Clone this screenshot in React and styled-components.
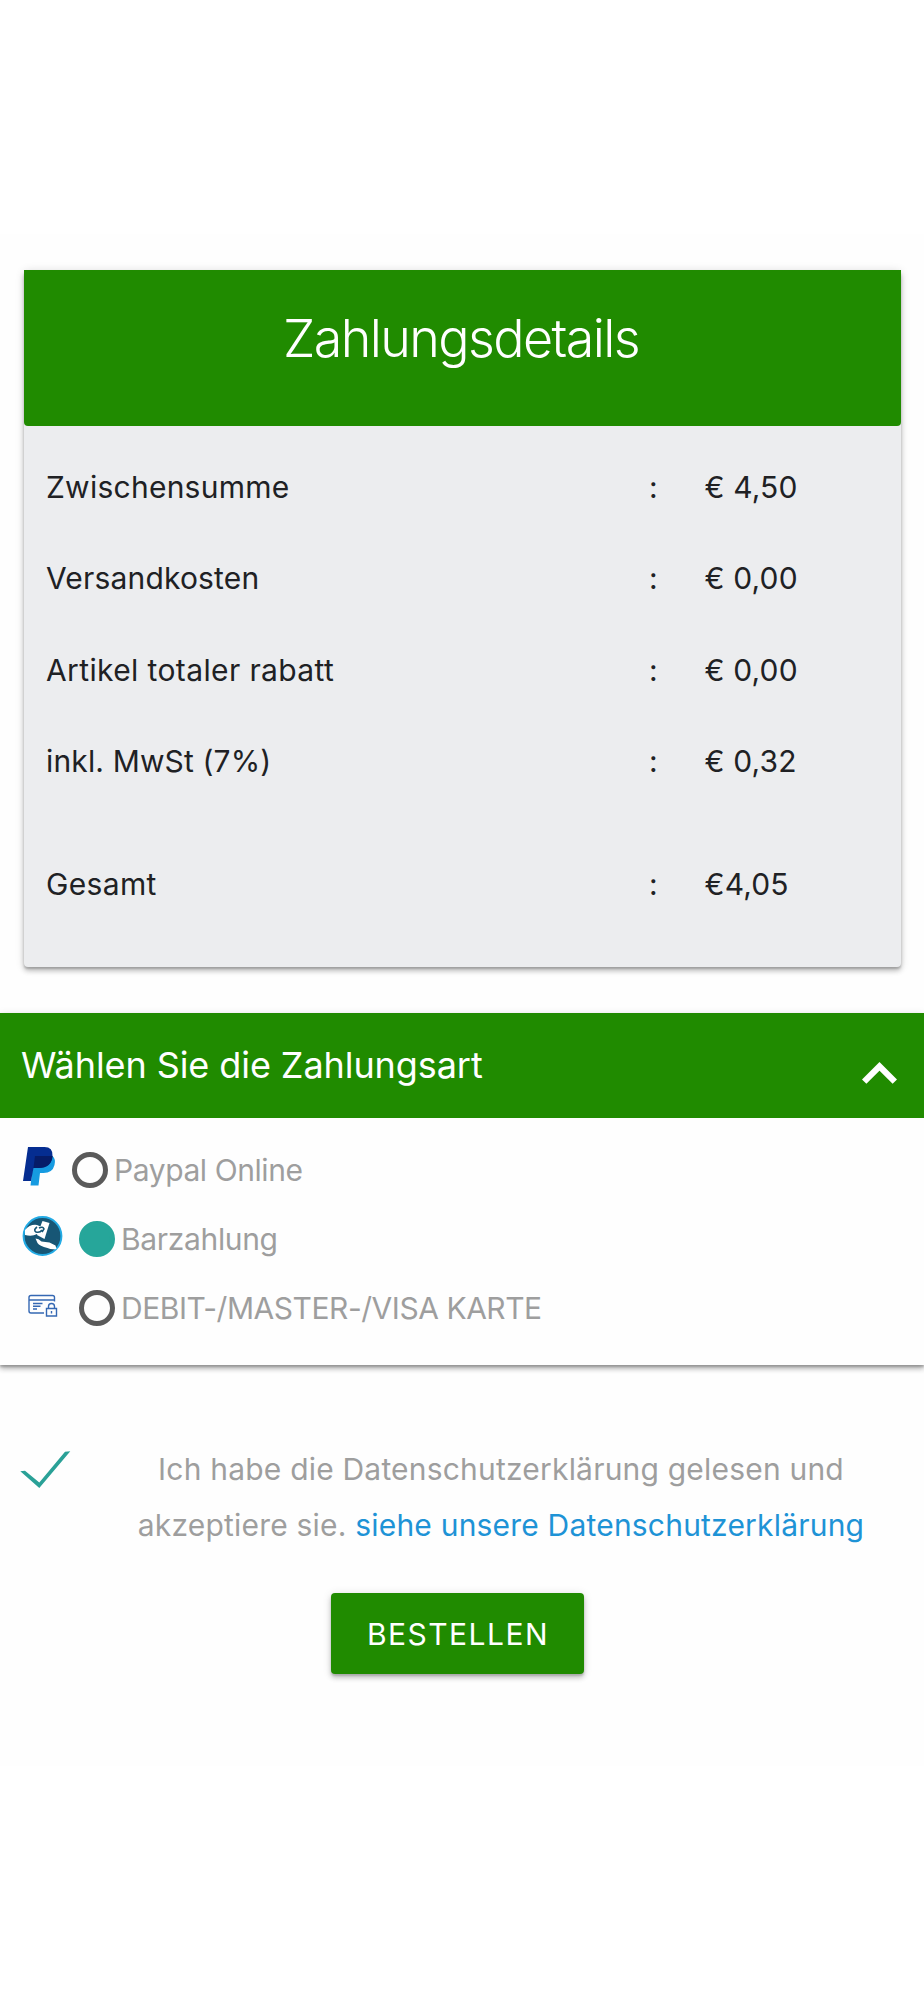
import React from "react";
import styled, { createGlobalStyle } from "styled-components";

const GlobalStyle = createGlobalStyle`
  body { margin: 0; background: #fff; }
  * { box-sizing: border-box; }
`;

const Page = styled.main`
  width: 924px;
  height: 2000px;
  padding-top: 234px;
  font-family: Inter, "Liberation Sans", sans-serif;
  font-size: 30px;
  line-height: 56px;
  overflow: hidden;
`;

const Content = styled.div`
  height: 1532px;
  padding-top: 36px;
  background: #fefefe;
`;

const Card = styled.section`
  width: 877px;
  height: 697px;
  margin-left: 24px;
  border-radius: 4px;
  background: #ecedef;
  box-shadow: 0 4px 5px rgba(0, 0, 0, 0.2), 0 1px 10px rgba(0, 0, 0, 0.14), 0 2px 2px rgba(0, 0, 0, 0.16);
`;

const CardHeader = styled.h1`
  height: 156px;
  margin: 0;
  padding: 39px 3px 0 0;
  border-radius: 0 0 4px 4px;
  background: #208b00;
  color: #fff;
  font-size: 52px;
  font-weight: 300;
  line-height: 60px;
  text-align: center;
`;

const Label = styled.span`
  letter-spacing: ${(p) => p.$spacing || 0}px;
  white-space: nowrap;
`;

const Summary = styled.div`
  padding-top: 33px;
`;

const SummaryRow = styled.div`
  display: grid;
  grid-template-columns: 603px 55.5px 1fr;
  height: 56px;
  margin-bottom: ${(p) => (p.$last ? 67 : 35.3)}px;
  padding-left: 22px;
  color: #202124;
`;

const Payment = styled.section`
  height: 352px;
  margin-top: 46px;
  background: #fefefe;
  box-shadow: 0 4px 5px rgba(0, 0, 0, 0.24), 0 1px 8px rgba(0, 0, 0, 0.1), 0 2px 2px rgba(0, 0, 0, 0.2);
`;

const PaymentHeader = styled.header`
  display: flex;
  justify-content: space-between;
  height: 105px;
  padding: 24px 27px 0 21px;
  background: #208b00;
  color: #fff;
  font-size: 36px;
`;

const Chevron = styled.svg`
  width: 35px;
  height: 22px;
  margin-top: 25px;
`;

const Option = styled.label`
  display: flex;
  align-items: center;
  height: 69.2px;
  padding-left: 22px;
  color: #9e9e9e;
`;

const Options = styled.div`
  padding-top: 17px;
`;

const OptionIcon = styled.svg`
  flex: none;
  width: ${(p) => p.$width}px;
  height: 40px;
  margin: ${(p) => p.$lift || -8}px ${(p) => p.$gap}px 0 0;
`;

const Radio = styled.span`
  flex: none;
  width: 36px;
  height: 36px;
  margin-right: 6px;
  border: 5px solid ${(p) => (p.$checked ? "#26a69a" : "#5a5a5a")};
  border-radius: 50%;
  background: ${(p) => (p.$checked ? "#26a69a" : "transparent")};
`;

const Consent = styled.div`
  display: flex;
  margin-top: 76px;
  padding-left: 20px;
  color: #9e9e9e;
`;

const Check = styled.svg`
  flex: none;
  width: 51px;
  height: 38px;
  margin-top: 10px;
`;

const ConsentText = styled.p`
  width: 740px;
  margin: 0 0 0 60px;
  letter-spacing: 0.2px;
  text-align: center;
`;

const ConsentLine = styled.span`
  display: block;
  white-space: nowrap;
`;

const Link = styled.a`
  color: #1e93d6;
`;

const OrderButton = styled.button`
  display: block;
  width: 253px;
  height: 81px;
  margin: 40px 0 0 331px;
  padding: 0 0 0 1px;
  border: 0;
  border-radius: 4px;
  background: #208b00;
  color: #fff;
  font: inherit;
  box-shadow: 0 4px 5px rgba(0, 0, 0, 0.18), 0 1px 10px rgba(0, 0, 0, 0.12), 0 2px 2px rgba(0, 0, 0, 0.14);
`;

const rows = [
  { name: "Zwischensumme", value: "€ 4,50", spacing: 0.25 },
  { name: "Versandkosten", value: "€ 0,00", spacing: 0.17 },
  { name: "Artikel totaler rabatt", value: "€ 0,00", spacing: 0.38 },
  { name: "inkl. MwSt (7%)", value: "€ 0,32", spacing: 0.14 },
  { name: "Gesamt", value: "€4,05", spacing: 0.35 },
];

function PaypalIcon() {
  return (
    <OptionIcon $width={34} $gap={16} viewBox="0 0 34 40">
      <path d="M12 10h18.500q3.500 3 2 9-2 8-11 8h-3.500l-1.500 12.500H8.500z" fill="#169be1" />
      <path d="M6 1h16.500q8.500 0 8 9-1 12-14 12h-5l-2.500 13H1z" fill="#052d91" />
      <path d="M13 10h17.500q-1 12-14 12h-5z" fill="#061c68" />
    </OptionIcon>
  );
}

function CashIcon() {
  return (
    <OptionIcon $width={41} $gap={16} $lift={-6} viewBox="0 0 41 40">
      <circle cx="20.500" cy="20" r="18.900" fill="#175675" stroke="#23abe5" strokeWidth="2" />
      <path d="M20.500 5l7 2-5 16-7.500-4z" fill="#fff" />
      <path d="M3 14q5-6 12-5l7 3q3 2 1 5-4 4-8 1-5 3-12 1z" fill="#fff" />
      <path d="M15 11q-4 3-1 5 4 1 6-2m-3-2q4-2 5 1l-2 3" fill="none" stroke="#175675" strokeWidth="1.600" />
      <path d="M13.500 22.500q3 0 6 3l8 1 6 3 1 3.500q-5 1-9-1-8-2-10-5z" fill="#fff" />
    </OptionIcon>
  );
}

function SecureCardIcon() {
  return (
    <OptionIcon $width={41} $gap={16} viewBox="0 0 41 40" fill="none" stroke="#3568b3" strokeWidth="1.400">
      <path d="M22 29H9q-2 0-2-2V13.500q0-2 2-2h21.500q2 0 2 2v4M7 16h25.500M11 19.500h9.500M11 22.300h7.500M11 25h4" />
      <path d="M24.500 24.500h10V32h-10zM26.500 24.500v-2q0-3 3-3t3 3v2M29.500 27v2.500" />
    </OptionIcon>
  );
}

export default function App() {
  return (
    <>
      <GlobalStyle />
      <Page>
        <Content>
          <Card>
            <CardHeader><Label $spacing={-1.6}>Zahlungsdetails</Label></CardHeader>
            <Summary>
              {rows.map(({ name, value, spacing }, i) => (
                <SummaryRow key={name} $last={i === 3}>
                  <Label $spacing={spacing}>{name}</Label>
                  <Label>:</Label>
                  <Label $spacing={0.15}>{value}</Label>
                </SummaryRow>
              ))}
            </Summary>
          </Card>
          <Payment>
            <PaymentHeader>
              <Label $spacing={-0.08}>Wählen Sie die Zahlungsart</Label>
              <Chevron viewBox="0 0 35 22" fill="none" stroke="#fff" strokeWidth="6.200">
                <path d="M2.200 19.600L17.500 4.400 32.800 19.600" />
              </Chevron>
            </PaymentHeader>
            <Options>
              <Option><PaypalIcon /><Radio /><Label $spacing={-0.42}>Paypal Online</Label></Option>
              <Option><CashIcon /><Radio $checked /><Label $spacing={-0.34}>Barzahlung</Label></Option>
              <Option><SecureCardIcon /><Radio /><Label $spacing={-0.46}>DEBIT-/MASTER-/VISA KARTE</Label></Option>
            </Options>
          </Payment>
          <Consent>
            <Check viewBox="0 0 51 38">
              <path d="M.3 20.300L5 19.800 19.300 31.500 45 .7 50.300.3 19.300 36.900z" fill="#2aa197" />
            </Check>
            <ConsentText>
              <ConsentLine>Ich habe die Datenschutzerklärung gelesen und</ConsentLine>
              <ConsentLine>akzeptiere sie. <Link>siehe unsere Datenschutzerklärung</Link></ConsentLine>
            </ConsentText>
          </Consent>
          <OrderButton><Label $spacing={1.45}>BESTELLEN</Label></OrderButton>
        </Content>
      </Page>
    </>
  );
}
